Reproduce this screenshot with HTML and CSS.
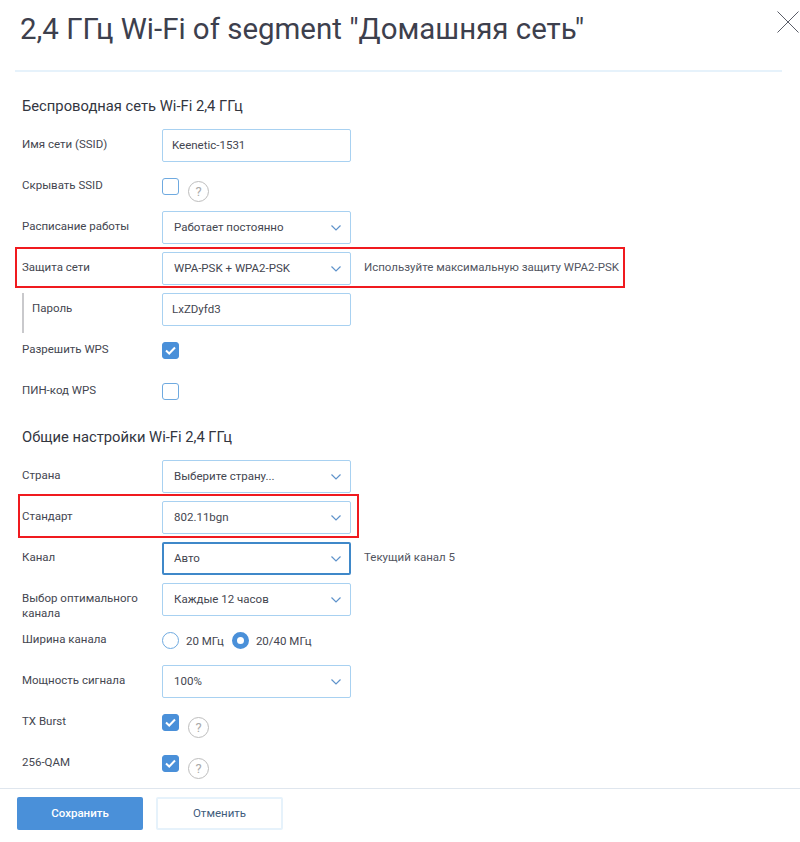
FILE: index.html
```html
<!DOCTYPE html>
<html lang="en">
<head>
  <meta charset="UTF-8"/>
  <title>Wi-Fi segment</title>
  <link rel="stylesheet" href="styles.css">
</head>
<body>
  <div class="modal">
    <div class="title-bar">
      <h1>2,4 ГГц Wi-Fi of segment "Домашняя сеть"</h1>
    </div>
    <svg class="close" width="22" height="22" viewBox="0 0 22 22"><path d="M0.5 0.5 L21.5 21.5 M21.5 0.5 L0.5 21.5"/></svg>

    <h2 class="section-title first">Беспроводная сеть Wi-Fi 2,4 ГГц</h2>
    <div class="row">
      <label class="row-label">Имя сети (SSID)</label>
      <input class="field" type="text" value="Keenetic-1531"/>
    </div>
    <div class="row">
      <label class="row-label">Скрывать SSID</label>
      <span class="check"></span>
      <span class="help">?</span>
    </div>
    <div class="row">
      <label class="row-label">Расписание работы</label>
      <div class="select">
        <span>Работает постоянно</span>
        <svg class="chevron" width="10" height="6" viewBox="0 0 10 6"><path d="M0.5 0.5 L5 5 L9.5 0.5"/></svg>
      </div>
    </div>
    <div class="row">
      <label class="row-label">Защита сети</label>
      <div class="select">
        <span>WPA-PSK + WPA2-PSK</span>
        <svg class="chevron" width="10" height="6" viewBox="0 0 10 6"><path d="M0.5 0.5 L5 5 L9.5 0.5"/></svg>
      </div>
      <span class="hint">Используйте максимальную защиту WPA2-PSK</span>
    </div>
    <div class="row">
      <label class="row-label nested">Пароль</label>
      <input class="field" type="text" value="LxZDyfd3"/>
    </div>
    <div class="row">
      <label class="row-label">Разрешить WPS</label>
      <span class="check on"><svg width="11" height="9" viewBox="0 0 11 9"><path d="M1 4.5 L4.2 7.5 L10 1.5"/></svg></span>
    </div>
    <div class="row">
      <label class="row-label">ПИН-код WPS</label>
      <span class="check"></span>
    </div>

    <h2 class="section-title">Общие настройки Wi-Fi 2,4 ГГц</h2>
    <div class="row">
      <label class="row-label">Страна</label>
      <div class="select">
        <span>Выберите страну...</span>
        <svg class="chevron" width="10" height="6" viewBox="0 0 10 6"><path d="M0.5 0.5 L5 5 L9.5 0.5"/></svg>
      </div>
    </div>
    <div class="row">
      <label class="row-label">Стандарт</label>
      <div class="select">
        <span>802.11bgn</span>
        <svg class="chevron" width="10" height="6" viewBox="0 0 10 6"><path d="M0.5 0.5 L5 5 L9.5 0.5"/></svg>
      </div>
    </div>
    <div class="row">
      <label class="row-label">Канал</label>
      <div class="select focused">
        <span>Авто</span>
        <svg class="chevron" width="10" height="6" viewBox="0 0 10 6"><path d="M0.5 0.5 L5 5 L9.5 0.5"/></svg>
      </div>
      <span class="hint">Текущий канал 5</span>
    </div>
    <div class="row">
      <label class="row-label">Выбор оптимального канала</label>
      <div class="select">
        <span>Каждые 12 часов</span>
        <svg class="chevron" width="10" height="6" viewBox="0 0 10 6"><path d="M0.5 0.5 L5 5 L9.5 0.5"/></svg>
      </div>
    </div>
    <div class="row">
      <label class="row-label">Ширина канала</label>
      <div class="radios">
        <span class="radio"></span><span class="radio-text">20 МГц</span>
        <span class="radio on"></span><span class="radio-text">20/40 МГц</span>
      </div>
    </div>
    <div class="row">
      <label class="row-label">Мощность сигнала</label>
      <div class="select">
        <span>100%</span>
        <svg class="chevron" width="10" height="6" viewBox="0 0 10 6"><path d="M0.5 0.5 L5 5 L9.5 0.5"/></svg>
      </div>
    </div>
    <div class="row">
      <label class="row-label">TX Burst</label>
      <span class="check on"><svg width="11" height="9" viewBox="0 0 11 9"><path d="M1 4.5 L4.2 7.5 L10 1.5"/></svg></span>
      <span class="help">?</span>
    </div>
    <div class="row">
      <label class="row-label">256-QAM</label>
      <span class="check on"><svg width="11" height="9" viewBox="0 0 11 9"><path d="M1 4.5 L4.2 7.5 L10 1.5"/></svg></span>
      <span class="help">?</span>
    </div>

    <div class="footer">
      <button class="btn btn-save">Сохранить</button>
      <button class="btn btn-cancel">Отменить</button>
    </div>

    <!-- red annotation frames drawn over the form -->
    <div class="mark mark-security"></div>
    <div class="mark mark-standard"></div>
  </div>
</body>
</html>
```

FILE: styles.css
```css
body {
  margin: 0;
  background: #fff;
  font-family: Roboto, sans-serif;
  color: #3c3f4a;
}
.modal {
  position: relative;
  width: 800px;
  height: 842px;
  overflow: hidden;
}
.title-bar {
  height: 70px;
  margin: 0 18px 0 15px;
  padding-left: 5px;
  border-bottom: 2px solid #e6f2fb;
}
h1 {
  margin: 0;
  font-size: 29.45px;
  font-weight: 400;
  line-height: 58px;
  color: #3d404d;
}
.close {
  position: absolute;
  left: 777px;
  top: 11px;
}
.close path {
  fill: none;
  stroke: #5a5d68;
  stroke-width: 1;
}
.section-title {
  margin: 11px 0 13px 22px;
  font-size: 14.75px;
  font-weight: 400;
  line-height: 20px;
  color: #33363f;
}
.section-title.first {
  margin-top: 24px;
}
.row {
  display: flex;
  align-items: flex-start;
  height: 41px;
  padding-left: 22px;
}
.row-label {
  width: 140px;
  flex-shrink: 0;
  box-sizing: border-box;
  padding: 8px 10px 0 0;
  font-size: 11.5px;
  line-height: 15px;
  color: #444650;
}
.row-label.nested {
  height: 40px;
  padding-left: 8px;
  border-left: 2px solid #c9c9cc;
}
.field, .select {
  box-sizing: border-box;
  width: 189px;
  height: 33px;
  border: 1px solid #a8d1f1;
  border-radius: 2px;
  background: #fff;
  font-family: Roboto, sans-serif;
  font-size: 11.5px;
  color: #444650;
}
.field {
  padding: 0 9px 2px;
  outline: none;
}
.select {
  display: flex;
  align-items: center;
  justify-content: space-between;
  padding: 0 9px 2px 11px;
}
.select.focused {
  border: 2px solid #3f88c9;
  padding: 0 8px 2px 10px;
}
.chevron {
  margin-top: 3px;
}
.chevron path {
  fill: none;
  stroke: #5f93cb;
  stroke-width: 1.2;
}
.hint {
  margin-left: 13px;
  padding-top: 8px;
  font-size: 11.5px;
  line-height: 15px;
  color: #52555f;
  white-space: nowrap;
}
.check {
  box-sizing: border-box;
  display: flex;
  align-items: center;
  justify-content: center;
  width: 17px;
  height: 17px;
  margin-top: 8px;
  border: 1px solid #6faae0;
  border-radius: 3px;
  background: #fff;
}
.check.on {
  background: #4a90d9;
  border-color: #4a90d9;
}
.check svg path {
  fill: none;
  stroke: #fff;
  stroke-width: 2;
}
.help {
  box-sizing: border-box;
  width: 21px;
  height: 21px;
  margin: 11px 0 0 9px;
  border: 1px solid #bdbdbd;
  border-radius: 50%;
  font-size: 13px;
  line-height: 19px;
  text-align: center;
  color: #aaa;
}
.radios {
  display: flex;
  align-items: center;
  margin-top: 8px;
}
.radio {
  box-sizing: border-box;
  width: 17px;
  height: 17px;
  border: 1px solid #6faae0;
  border-radius: 50%;
  background: #fff;
}
.radio.on {
  border: 5px solid #4a90d9;
}
.radio-text {
  margin: 0 8px 0 7px;
  font-size: 11.5px;
  color: #444650;
}
.footer {
  display: flex;
  gap: 13px;
  height: 53px;
  padding: 8px 17px 0;
  border-top: 1px solid #dfe6ee;
}
.btn {
  box-sizing: border-box;
  width: 127px;
  height: 33px;
  padding-bottom: 2px;
  border-radius: 2px;
  font-family: Roboto, sans-serif;
  font-size: 11.5px;
}
.btn-save {
  width: 126px;
  background: #4a90d9;
  border: none;
  font-weight: 500;
  color: #fff;
}
.btn-cancel {
  background: #fff;
  border: 2px solid #e6f2fb;
  color: #3f5c7c;
}
.mark {
  position: absolute;
  box-sizing: border-box;
  border: 2px solid #f01a1f;
}
.mark-security {
  left: 15px;
  top: 247px;
  width: 610px;
  height: 41px;
}
.mark-standard {
  left: 18px;
  top: 494px;
  width: 341px;
  height: 44px;
}
```
